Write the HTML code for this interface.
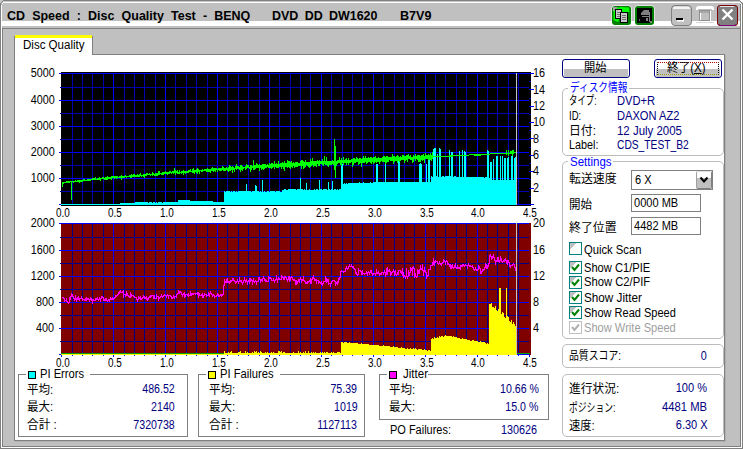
<!DOCTYPE html>
<html lang="ja">
<head>
<meta charset="utf-8">
<title>CD Speed : Disc Quality Test</title>
<style>
html,body{margin:0;padding:0}
body{width:743px;height:449px;overflow:hidden;background:#c0c0c0;position:relative;font-family:"Liberation Sans","Noto Sans CJK JP",sans-serif;font-size:12px}
.a{position:absolute}
.t{position:absolute;white-space:pre;line-height:16px;height:16px}
.gb{position:absolute;border:1px solid #bcbcbc;border-radius:5px;box-sizing:border-box}
.sq{position:absolute;border:1px solid #808080;box-sizing:border-box}
.lbg{position:absolute;background:#fff}
.btn{position:absolute;box-sizing:border-box;border:1px solid #000080;border-radius:3px;background:#fff;overflow:hidden}
.btn i{position:absolute;left:1px;right:1px;top:9px;bottom:0;background:#c0c0c0}
.edit{position:absolute;box-sizing:border-box;border:1px solid #808080;background:#fff}
.cb{position:absolute;width:13px;height:13px;box-sizing:border-box;border:1px solid #008080;background:linear-gradient(135deg,#c0c0c0 0,#c0c0c0 28%,#fff 29%)}
.cb svg{position:absolute;left:0;top:0}
.leg{position:absolute;width:8px;height:8px;box-sizing:border-box;border:1px solid #000}
</style>
</head>
<body>
<!-- outer frame -->
<div class="a" style="left:0;top:0;width:743px;height:1px;background:#808080"></div>
<div class="a" style="left:2px;top:1px;width:739px;height:1px;background:#c8c8c8"></div>
<div class="a" style="left:2px;top:2px;width:738px;height:1px;background:#fff"></div>
<div class="a" style="left:0;top:0;width:1px;height:449px;background:#808080"></div>
<div class="a" style="left:1px;top:3px;width:1px;height:445px;background:#fff"></div>
<div class="a" style="left:742px;top:0;width:1px;height:449px;background:#808080"></div>
<div class="a" style="left:741px;top:3px;width:1px;height:445px;background:#fff"></div>
<div class="a" style="left:740px;top:4px;width:1px;height:443px;background:#808080"></div>
<div class="a" style="left:0;top:448px;width:743px;height:1px;background:#808080"></div>
<div class="a" style="left:1px;top:447px;width:741px;height:1px;background:#fff"></div>
<div class="a" style="left:2px;top:446px;width:739px;height:1px;background:#808080"></div>
<!-- rounded corners of the window -->
<svg class="a" style="left:0;top:0" width="6" height="6" viewBox="0 0 6 6" shape-rendering="crispEdges"><rect width="3" height="1" fill="#c8c8c8"/><rect y="1" width="2" height="1" fill="#c8c8c8"/><rect y="2" width="1" height="1" fill="#c8c8c8"/><rect x="2" y="1" width="1" height="1" fill="#808080"/><rect x="1" y="2" width="1" height="1" fill="#808080"/><rect x="2" y="2" width="1" height="1" fill="#c0c0c0"/><rect x="1" y="3" width="1" height="2" fill="#c0c0c0"/><rect x="3" y="2" width="1" height="1" fill="#fff"/><rect x="2" y="3" width="1" height="1" fill="#fff"/></svg>
<svg class="a" style="left:737px;top:0" width="6" height="6" viewBox="0 0 6 6" shape-rendering="crispEdges"><rect x="3" width="3" height="1" fill="#fff"/><rect x="4" y="1" width="2" height="1" fill="#fff"/><rect x="5" y="2" width="1" height="1" fill="#d0d0d0"/><rect x="2" y="0" width="1" height="1" fill="#808080"/><rect x="3" y="1" width="1" height="1" fill="#808080"/><rect x="4" y="2" width="1" height="1" fill="#808080"/><rect x="5" y="3" width="1" height="1" fill="#808080"/><rect x="2" y="2" width="1" height="1" fill="#fff"/><rect x="3" y="3" width="1" height="1" fill="#fff"/><rect x="4" y="4" width="1" height="1" fill="#fff"/><rect x="3" y="2" width="1" height="1" fill="#c0c0c0"/><rect x="4" y="3" width="1" height="1" fill="#c0c0c0"/></svg>
<!-- white band under the title -->
<div class="a" style="left:2px;top:21px;width:738px;height:5px;background:#fff"></div>
<!-- inner sunken box -->
<div class="a" style="left:2px;top:28px;width:738px;height:1px;background:#808080"></div>
<div class="a" style="left:2px;top:28px;width:1px;height:418px;background:#808080"></div>
<!-- tab pane -->
<div class="a" style="left:14px;top:54px;width:711px;height:387px;background:#808080"></div>
<div class="a" style="left:725px;top:55px;width:1px;height:387px;background:#b0b0b0"></div>
<div class="a" style="left:15px;top:441px;width:711px;height:1px;background:#b0b0b0"></div>
<div class="a" style="left:15px;top:55px;width:709px;height:385px;background:#fff"></div>
<!-- tab -->
<div class="a" style="left:14px;top:36px;width:79px;height:19px;background:#808080"></div>
<div class="a" style="left:15px;top:35px;width:77px;height:3px;background:#ffff00;border-radius:1px 1px 0 0"></div>
<div class="a" style="left:15px;top:38px;width:77px;height:18px;background:#fff"></div>

<!-- title bar buttons -->
<svg class="a" style="left:606px;top:0" width="137" height="30" viewBox="606 0 137 30">
 <!-- icon 1 -->
 <rect x="611.5" y="5.5" width="20" height="20" rx="3" fill="#fff"/>
 <rect x="612" y="6" width="19" height="19" rx="3" fill="#008000"/>
 <path d="M613.5 8.5 L621 7 L629 7.5 L629.5 12 L622 13 L618 22 L613.5 20 Z" fill="#00ff00"/>
 <path d="M613 7 L618 7 L613 12 Z" fill="#a0a0a0"/>
 <rect x="615.5" y="9.500" width="6" height="9" fill="#c8c8c8" stroke="#000" stroke-width="1"/>
 <rect x="620.500" y="12.500" width="7" height="10" fill="#c8c8c8" stroke="#000" stroke-width="1"/>
 <path d="M622 15.500h4M622 17.500h4M622 19.500h4M617 12.500h3M617 14.500h3M617 16.500h3" stroke="#707070" stroke-width="1"/>
 <!-- icon 2 -->
 <rect x="634.5" y="5.500" width="20" height="20" rx="3" fill="#fff"/>
 <rect x="635" y="6" width="19" height="19" rx="3" fill="#008000"/>
 <rect x="637" y="8" width="15" height="15" fill="#000"/>
 <path d="M641 13 L644 10 L649 10 L649 15 L641 15 Z" fill="#808080"/>
 <rect x="646" y="18" width="2" height="3" fill="#808080"/>
 <rect x="649" y="12" width="1" height="10" fill="#808080"/>
 <rect x="642" y="16" width="8" height="1" fill="#808080"/>
 <rect x="650" y="21" width="2" height="2" fill="#808080"/>
 <rect x="639" y="19" width="1" height="2" fill="#606060"/>
 <!-- minimize -->
 <rect x="671.500" y="5.500" width="20" height="20" rx="3.5" fill="#c0c0c0" stroke="#808080"/>
 <path d="M673 9 V8 Q673 6.500 675 6.500 H688 Q690 6.500 690 8 V9 Z" fill="#f4f4f4"/>
 <rect x="677" y="19" width="7" height="2.500" fill="#fff"/>
 <rect x="676" y="18" width="7" height="2" fill="#000"/>
 <!-- maximize (disabled) -->
 <path d="M696 10 V8.500 Q696 6 699 6 H711 Q714 6 714 8.500 V10 H712 V9 H698 V10 Z" fill="#fff"/>
 <rect x="700.500" y="11.500" width="10" height="10" fill="none" stroke="#fff"/>
 <rect x="699.500" y="10.500" width="10" height="10" fill="none" stroke="#909090"/>
 <rect x="700" y="11" width="9" height="2" fill="#a8a8a8"/>
 <rect x="696" y="22" width="18" height="1" fill="#d8d8d8"/>
 <!-- close -->
 <rect x="717.500" y="5.500" width="20" height="20" rx="2.500" fill="#808080" stroke="#800000"/>
 <rect x="720" y="6" width="14" height="1" fill="#e0e8e8"/>
 <path d="M719 24.500 Q720 25.500 721 25.500 H734 Q735 25.500 736 24.500" stroke="#800080" fill="none"/>
 <path d="M722.500 9.500 L732.500 19.500 M732.500 9.500 L722.500 19.500" stroke="#fff" stroke-width="2.400" fill="none"/>
</svg>

<svg id="charts" width="743" height="449" viewBox="0 0 743 449" shape-rendering="crispEdges" style="position:absolute;left:0;top:0">
<rect x="61" y="72" width="470" height="134" fill="#000"/>
<rect x="72" y="73" width="1" height="132" fill="#0000b0"/><rect x="82" y="73" width="1" height="132" fill="#0000b0"/><rect x="92" y="73" width="1" height="132" fill="#0000b0"/><rect x="103" y="73" width="1" height="132" fill="#0000b0"/><rect x="113" y="73" width="1" height="132" fill="#0000ff"/><rect x="124" y="73" width="1" height="132" fill="#0000b0"/><rect x="134" y="73" width="1" height="132" fill="#0000b0"/><rect x="144" y="73" width="1" height="132" fill="#0000b0"/><rect x="155" y="73" width="1" height="132" fill="#0000b0"/><rect x="165" y="73" width="1" height="132" fill="#0000ff"/><rect x="175" y="73" width="1" height="132" fill="#0000b0"/><rect x="186" y="73" width="1" height="132" fill="#0000b0"/><rect x="196" y="73" width="1" height="132" fill="#0000b0"/><rect x="207" y="73" width="1" height="132" fill="#0000b0"/><rect x="217" y="73" width="1" height="132" fill="#0000ff"/><rect x="227" y="73" width="1" height="132" fill="#0000b0"/><rect x="238" y="73" width="1" height="132" fill="#0000b0"/><rect x="248" y="73" width="1" height="132" fill="#0000b0"/><rect x="259" y="73" width="1" height="132" fill="#0000b0"/><rect x="269" y="73" width="1" height="132" fill="#0000ff"/><rect x="279" y="73" width="1" height="132" fill="#0000b0"/><rect x="290" y="73" width="1" height="132" fill="#0000b0"/><rect x="300" y="73" width="1" height="132" fill="#0000b0"/><rect x="310" y="73" width="1" height="132" fill="#0000b0"/><rect x="321" y="73" width="1" height="132" fill="#0000ff"/><rect x="331" y="73" width="1" height="132" fill="#0000b0"/><rect x="342" y="73" width="1" height="132" fill="#0000b0"/><rect x="352" y="73" width="1" height="132" fill="#0000b0"/><rect x="362" y="73" width="1" height="132" fill="#0000b0"/><rect x="373" y="73" width="1" height="132" fill="#0000ff"/><rect x="383" y="73" width="1" height="132" fill="#0000b0"/><rect x="394" y="73" width="1" height="132" fill="#0000b0"/><rect x="404" y="73" width="1" height="132" fill="#0000b0"/><rect x="414" y="73" width="1" height="132" fill="#0000b0"/><rect x="425" y="73" width="1" height="132" fill="#0000ff"/><rect x="435" y="73" width="1" height="132" fill="#0000b0"/><rect x="445" y="73" width="1" height="132" fill="#0000b0"/><rect x="456" y="73" width="1" height="132" fill="#0000b0"/><rect x="466" y="73" width="1" height="132" fill="#0000b0"/><rect x="477" y="73" width="1" height="132" fill="#0000ff"/><rect x="487" y="73" width="1" height="132" fill="#0000b0"/><rect x="497" y="73" width="1" height="132" fill="#0000b0"/><rect x="508" y="73" width="1" height="132" fill="#0000b0"/><rect x="518" y="73" width="1" height="132" fill="#0000b0"/><rect x="59" y="73" width="470" height="1" fill="#0000ff"/><rect x="60" y="87" width="469" height="1" fill="#0000b0"/><rect x="59" y="100" width="470" height="1" fill="#0000ff"/><rect x="60" y="113" width="469" height="1" fill="#0000b0"/><rect x="59" y="126" width="470" height="1" fill="#0000ff"/><rect x="60" y="139" width="469" height="1" fill="#0000b0"/><rect x="59" y="152" width="470" height="1" fill="#0000ff"/><rect x="60" y="165" width="469" height="1" fill="#0000b0"/><rect x="59" y="178" width="470" height="1" fill="#0000ff"/><rect x="60" y="191" width="469" height="1" fill="#0000b0"/><rect x="59" y="204" width="470" height="1" fill="#0000ff"/>
<rect x="529" y="204" width="5" height="1" fill="#0000ff"/>
<rect x="529" y="196" width="2" height="1" fill="#0000b0"/>
<rect x="529" y="188" width="5" height="1" fill="#0000ff"/>
<rect x="529" y="179" width="2" height="1" fill="#0000b0"/>
<rect x="529" y="171" width="5" height="1" fill="#0000ff"/>
<rect x="529" y="163" width="2" height="1" fill="#0000b0"/>
<rect x="529" y="155" width="5" height="1" fill="#0000ff"/>
<rect x="529" y="147" width="2" height="1" fill="#0000b0"/>
<rect x="529" y="138" width="5" height="1" fill="#0000ff"/>
<rect x="529" y="130" width="2" height="1" fill="#0000b0"/>
<rect x="529" y="122" width="5" height="1" fill="#0000ff"/>
<rect x="529" y="114" width="2" height="1" fill="#0000b0"/>
<rect x="529" y="106" width="5" height="1" fill="#0000ff"/>
<rect x="529" y="98" width="2" height="1" fill="#0000b0"/>
<rect x="529" y="89" width="5" height="1" fill="#0000ff"/>
<rect x="529" y="81" width="2" height="1" fill="#0000b0"/>
<rect x="529" y="73" width="5" height="1" fill="#0000ff"/>
<path d="M61,205V204H120V203H135V202H148V203H149V202H152V203H153V202H155V203H156V202H157V203H158V202H162V203H163V202H178V200H190V201H213V202H224V191H225V192H226V191H230V192H231V191H232V192H233V191H235V192H236V191H237V192H238V191H246V184H247V191H251V192H252V191H255V185H256V186H257V191H259V192H260V191H261V192H262V180H263V192H264V191H265V192H267V191H269V192H270V191H275V192H276V191H280V192H282V190H284V189H286V190H288V189H296V190H297V189H300V178H301V189H303V190H304V189H305V190H306V183H307V190H309V189H310V190H314V189H315V190H316V189H318V190H319V180H320V189H322V190H323V189H327V190H328V182H329V189H330V190H331V189H332V181H333V190H334V189H336V190H337V189H338V190H339V189H341V164H343V184H344V183H345V184H346V183H347V184H348V183H359V182H360V183H363V182H364V183H370V182H371V183H373V182H376V164H378V182H385V163H386V182H398V161H400V182H419V164H420V163H421V164H422V182H426V164H427V182H428V158H430V182H431V176H432V177H433V149H434V148H436V176H437V154H438V177H439V148H440V149H441V177H442V176H444V177H445V176H449V150H450V176H451V152H453V177H454V176H456V177H459V151H460V177H462V150H463V177H464V151H465V152H466V177H484V178H485V177H487V150H488V151H489V178H490V162H492V180H493V159H494V180H496V156H498V180H500V156H501V180H502V156H503V180H504V158H506V180H507V158H508V157H509V180H511V156H513V180H514V158H515V157H517V205Z" fill="#00ffff"/>
<rect x="61" y="204" width="456" height="1" fill="#00ffff"/>
<path d="M62.5,182V187M63.5,182V184M64.5,182V183M65.5,182V183M66.5,181V183M67.5,181V183M68.5,181V183M69.5,181V183M70.5,181V182M71.5,181V200M72.5,181V182M73.5,181V183M74.5,181V182M75.5,180V182M76.5,181V182M77.5,180V182M78.5,180V182M79.5,180V183M80.5,180V182M81.5,180V182M82.5,180V182M83.5,179V181M84.5,179V181M85.5,180V181M86.5,180V181M87.5,179V181M88.5,179V181M89.5,179V181M90.5,179V181M91.5,179V180M92.5,178V180M93.5,178V180M94.5,178V180M95.5,177V180M96.5,179V180M97.5,178V180M98.5,178V180M99.5,177V180M100.5,178V181M101.5,178V179M102.5,177V179M103.5,177V179M104.5,178V180M105.5,177V180M106.5,177V180M107.5,176V180M108.5,177V179M109.5,177V179M110.5,177V179M111.5,176V180M112.5,176V178M113.5,176V178M114.5,176V179M115.5,176V178M116.5,176V179M117.5,176V178M118.5,177V178M119.5,176V178M120.5,176V178M121.5,175V180M122.5,176V178M123.5,176V178M124.5,176V178M125.5,175V177M126.5,176V178M127.5,176V177M128.5,176V177M129.5,175V177M130.5,175V178M131.5,174V178M132.5,175V177M133.5,174V177M134.5,174V177M135.5,175V177M136.5,175V177M137.5,174V177M138.5,175V177M139.5,174V177M140.5,173V176M141.5,175V177M142.5,175V176M143.5,174V177M144.5,174V178M145.5,174V176M146.5,173V176M147.5,173V175M148.5,174V175M149.5,173V175M150.5,174V176M151.5,174V175M152.5,172V176M153.5,173V175M154.5,174V176M155.5,173V176M156.5,173V176M157.5,173V176M158.5,171V175M159.5,171V175M160.5,173V174M161.5,173V175M162.5,172V175M163.5,172V175M164.5,172V174M165.5,171V174M166.5,172V174M167.5,172V175M168.5,172V174M169.5,171V174M170.5,171V173M171.5,172V174M172.5,171V173M173.5,171V174M174.5,168V173M175.5,170V175M176.5,171V173M177.5,170V174M178.5,172V174M179.5,170V174M180.5,172V173M181.5,171V174M182.5,171V173M183.5,170V175M184.5,171V173M185.5,171V174M186.5,171V173M187.5,171V173M188.5,170V173M189.5,170V172M190.5,169V172M191.5,171V172M192.5,169V173M193.5,168V173M194.5,170V174M195.5,170V172M196.5,169V173M197.5,168V174M198.5,169V172M199.5,170V174M200.5,170V171M201.5,170V172M202.5,169V172M203.5,170V171M204.5,169V171M205.5,169V171M206.5,169V172M207.5,168V172M208.5,169V172M209.5,169V172M210.5,169V173M211.5,168V171M212.5,167V171M213.5,168V172M214.5,168V171M215.5,168V172M216.5,168V170M217.5,169V172M218.5,168V170M219.5,168V171M220.5,168V171M221.5,168V171M222.5,166V170M223.5,167V171M224.5,168V171M225.5,168V171M226.5,167V170M227.5,168V171M228.5,167V172M229.5,165V171M230.5,166V171M231.5,167V170M232.5,166V173M233.5,167V170M234.5,168V172M235.5,166V169M236.5,164V170M237.5,166V169M238.5,166V169M239.5,167V170M240.5,165V172M241.5,165V170M242.5,166V171M243.5,167V169M244.5,167V168M245.5,166V170M246.5,164V169M247.5,165V168M248.5,165V168M249.5,167V169M250.5,165V172M251.5,165V170M252.5,166V168M253.5,160V170M254.5,165V170M255.5,165V169M256.5,163V168M257.5,164V168M258.5,165V168M259.5,164V171M260.5,165V168M261.5,165V170M262.5,164V169M263.5,164V170M264.5,164V169M265.5,164V168M266.5,165V168M267.5,164V167M268.5,165V168M269.5,163V168M270.5,164V168M271.5,163V169M272.5,163V168M273.5,164V167M274.5,161V169M275.5,164V167M276.5,163V168M277.5,164V168M278.5,161V168M279.5,164V167M280.5,163V167M281.5,163V169M282.5,162V167M283.5,163V169M284.5,161V171M285.5,163V167M286.5,163V167M287.5,160V168M288.5,161V167M289.5,161V168M290.5,162V169M291.5,161V167M292.5,163V168M293.5,162V166M294.5,163V168M295.5,162V167M296.5,162V167M297.5,162V167M298.5,163V166M299.5,163V166M300.5,161V166M301.5,160V169M302.5,160V166M303.5,161V169M304.5,162V168M305.5,160V167M306.5,162V165M307.5,162V166M308.5,162V167M309.5,162V168M310.5,159V167M311.5,161V166M312.5,158V165M313.5,161V167M314.5,161V166M315.5,161V166M316.5,161V167M317.5,160V164M318.5,161V166M319.5,160V166M320.5,161V164M321.5,161V164M322.5,159V165M323.5,161V166M324.5,156V164M325.5,161V165M326.5,157V165M327.5,161V166M328.5,161V167M329.5,161V165M330.5,161V165M331.5,161V165M332.5,160V164M333.5,161V165M334.5,139V170M335.5,146V178M336.5,161V166M337.5,160V164M338.5,160V163M339.5,157V163M340.5,160V165M341.5,158V166M342.5,160V163M343.5,157V165M344.5,160V163M345.5,159V163M346.5,158V165M347.5,160V163M348.5,158V165M349.5,160V163M350.5,160V163M351.5,159V162M352.5,159V167M353.5,158V165M354.5,158V163M355.5,159V163M356.5,157V162M357.5,158V162M358.5,159V165M359.5,158V164M360.5,158V163M361.5,159V167M362.5,158V163M363.5,156V163M364.5,158V163M365.5,156V162M366.5,158V164M367.5,158V163M368.5,157V162M369.5,158V162M370.5,157V163M371.5,157V164M372.5,158V162M373.5,157V164M374.5,157V163M375.5,156V162M376.5,158V163M377.5,158V162M378.5,157V162M379.5,158V164M380.5,158V162M381.5,158V161M382.5,157V162M383.5,156V162M384.5,156V162M385.5,157V164M386.5,156V163M387.5,156V162M388.5,157V162M389.5,157V160M390.5,157V161M391.5,157V161M392.5,154V161M393.5,156V164M394.5,156V162M395.5,157V161M396.5,156V161M397.5,155V163M398.5,156V161M399.5,157V162M400.5,156V161M401.5,157V160M402.5,155V160M403.5,155V160M404.5,156V163M405.5,156V161M406.5,155V160M407.5,155V162M408.5,154V159M409.5,156V159M410.5,155V160M411.5,157V160M412.5,157V163M413.5,155V162M414.5,156V159M415.5,154V161M416.5,156V159M417.5,155V160M418.5,155V162M419.5,155V162M420.5,156V162M421.5,155V160M422.5,155V161M423.5,154V160M424.5,156V163M425.5,153V159M426.5,155V159M427.5,155V159M428.5,154V160M429.5,155V160M430.5,153V160M431.5,155V161M432.5,152V159M433.5,156V157M434.5,156V157M435.5,156V157M436.5,156V157M437.5,156V157M438.5,156V157M439.5,156V157M440.5,156V157M441.5,156V157M442.5,156V157M443.5,156V157M444.5,156V157M445.5,156V157M446.5,156V157M447.5,156V157M448.5,156V157M449.5,155V157M450.5,155V157M451.5,155V157M452.5,155V157M453.5,155V156M454.5,155V156M455.5,155V156M456.5,155V156M457.5,155V156M458.5,155V156M459.5,155V156M460.5,155V156M461.5,155V156M462.5,155V156M463.5,155V156M464.5,155V156M465.5,155V156M466.5,155V156M467.5,155V156M468.5,155V156M469.5,154V155M470.5,154V155M471.5,154V155M472.5,154V155M473.5,154V155M474.5,154V156M475.5,154V156M476.5,154V156M477.5,154V156M478.5,154V156M479.5,154V156M480.5,154V156M481.5,154V155M482.5,154V155M483.5,154V155M484.5,154V155M485.5,154V155M486.5,154V155M487.5,154V155M488.5,154V155M489.5,154V155M490.5,153V154M491.5,153V154M492.5,153V154M493.5,153V154M494.5,153V154M495.5,153V154M496.5,153V154M497.5,153V154M498.5,153V154M499.5,153V154M500.5,153V154M501.5,153V154M502.5,153V154M503.5,153V154M504.5,153V154M505.5,153V154M506.5,150V155M507.5,153V154M508.5,150V156M509.5,153V154M510.5,151V154M511.5,151V154M512.5,150V156M513.5,150V154M514.5,152V153M515.5,152V153" stroke="#00ff00" stroke-width="1" fill="none"/>
<rect x="516" y="73" width="1" height="132" fill="#c0c0c0"/>
<rect x="61" y="223" width="470" height="132" fill="#800000"/>
<rect x="72" y="223" width="1" height="132" fill="#000088"/><rect x="82" y="223" width="1" height="132" fill="#000088"/><rect x="92" y="223" width="1" height="132" fill="#000088"/><rect x="103" y="223" width="1" height="132" fill="#000088"/><rect x="113" y="223" width="1" height="132" fill="#0000ff"/><rect x="124" y="223" width="1" height="132" fill="#000088"/><rect x="134" y="223" width="1" height="132" fill="#000088"/><rect x="144" y="223" width="1" height="132" fill="#000088"/><rect x="155" y="223" width="1" height="132" fill="#000088"/><rect x="165" y="223" width="1" height="132" fill="#0000ff"/><rect x="175" y="223" width="1" height="132" fill="#000088"/><rect x="186" y="223" width="1" height="132" fill="#000088"/><rect x="196" y="223" width="1" height="132" fill="#000088"/><rect x="207" y="223" width="1" height="132" fill="#000088"/><rect x="217" y="223" width="1" height="132" fill="#0000ff"/><rect x="227" y="223" width="1" height="132" fill="#000088"/><rect x="238" y="223" width="1" height="132" fill="#000088"/><rect x="248" y="223" width="1" height="132" fill="#000088"/><rect x="259" y="223" width="1" height="132" fill="#000088"/><rect x="269" y="223" width="1" height="132" fill="#0000ff"/><rect x="279" y="223" width="1" height="132" fill="#000088"/><rect x="290" y="223" width="1" height="132" fill="#000088"/><rect x="300" y="223" width="1" height="132" fill="#000088"/><rect x="310" y="223" width="1" height="132" fill="#000088"/><rect x="321" y="223" width="1" height="132" fill="#0000ff"/><rect x="331" y="223" width="1" height="132" fill="#000088"/><rect x="342" y="223" width="1" height="132" fill="#000088"/><rect x="352" y="223" width="1" height="132" fill="#000088"/><rect x="362" y="223" width="1" height="132" fill="#000088"/><rect x="373" y="223" width="1" height="132" fill="#0000ff"/><rect x="383" y="223" width="1" height="132" fill="#000088"/><rect x="394" y="223" width="1" height="132" fill="#000088"/><rect x="404" y="223" width="1" height="132" fill="#000088"/><rect x="414" y="223" width="1" height="132" fill="#000088"/><rect x="425" y="223" width="1" height="132" fill="#0000ff"/><rect x="435" y="223" width="1" height="132" fill="#000088"/><rect x="445" y="223" width="1" height="132" fill="#000088"/><rect x="456" y="223" width="1" height="132" fill="#000088"/><rect x="466" y="223" width="1" height="132" fill="#000088"/><rect x="477" y="223" width="1" height="132" fill="#0000ff"/><rect x="487" y="223" width="1" height="132" fill="#000088"/><rect x="497" y="223" width="1" height="132" fill="#000088"/><rect x="508" y="223" width="1" height="132" fill="#000088"/><rect x="518" y="223" width="1" height="132" fill="#000088"/><rect x="59" y="223" width="470" height="1" fill="#0000ff"/><rect x="60" y="237" width="469" height="1" fill="#000088"/><rect x="59" y="250" width="470" height="1" fill="#0000ff"/><rect x="60" y="263" width="469" height="1" fill="#000088"/><rect x="59" y="276" width="470" height="1" fill="#0000ff"/><rect x="60" y="289" width="469" height="1" fill="#000088"/><rect x="59" y="302" width="470" height="1" fill="#0000ff"/><rect x="60" y="315" width="469" height="1" fill="#000088"/><rect x="59" y="328" width="470" height="1" fill="#0000ff"/><rect x="60" y="341" width="469" height="1" fill="#000088"/><rect x="59" y="354" width="470" height="1" fill="#0000ff"/>
<rect x="61" y="355" width="1" height="2" fill="#0000ff"/>
<rect x="72" y="355" width="1" height="1" fill="#0000ff"/>
<rect x="82" y="355" width="1" height="1" fill="#0000ff"/>
<rect x="92" y="355" width="1" height="1" fill="#0000ff"/>
<rect x="103" y="355" width="1" height="1" fill="#0000ff"/>
<rect x="113" y="355" width="1" height="2" fill="#0000ff"/>
<rect x="124" y="355" width="1" height="1" fill="#0000ff"/>
<rect x="134" y="355" width="1" height="1" fill="#0000ff"/>
<rect x="144" y="355" width="1" height="1" fill="#0000ff"/>
<rect x="155" y="355" width="1" height="1" fill="#0000ff"/>
<rect x="165" y="355" width="1" height="2" fill="#0000ff"/>
<rect x="175" y="355" width="1" height="1" fill="#0000ff"/>
<rect x="186" y="355" width="1" height="1" fill="#0000ff"/>
<rect x="196" y="355" width="1" height="1" fill="#0000ff"/>
<rect x="207" y="355" width="1" height="1" fill="#0000ff"/>
<rect x="217" y="355" width="1" height="2" fill="#0000ff"/>
<rect x="227" y="355" width="1" height="1" fill="#0000ff"/>
<rect x="238" y="355" width="1" height="1" fill="#0000ff"/>
<rect x="248" y="355" width="1" height="1" fill="#0000ff"/>
<rect x="259" y="355" width="1" height="1" fill="#0000ff"/>
<rect x="269" y="355" width="1" height="2" fill="#0000ff"/>
<rect x="279" y="355" width="1" height="1" fill="#0000ff"/>
<rect x="290" y="355" width="1" height="1" fill="#0000ff"/>
<rect x="300" y="355" width="1" height="1" fill="#0000ff"/>
<rect x="310" y="355" width="1" height="1" fill="#0000ff"/>
<rect x="321" y="355" width="1" height="2" fill="#0000ff"/>
<rect x="331" y="355" width="1" height="1" fill="#0000ff"/>
<rect x="342" y="355" width="1" height="1" fill="#0000ff"/>
<rect x="352" y="355" width="1" height="1" fill="#0000ff"/>
<rect x="362" y="355" width="1" height="1" fill="#0000ff"/>
<rect x="373" y="355" width="1" height="2" fill="#0000ff"/>
<rect x="383" y="355" width="1" height="1" fill="#0000ff"/>
<rect x="394" y="355" width="1" height="1" fill="#0000ff"/>
<rect x="404" y="355" width="1" height="1" fill="#0000ff"/>
<rect x="414" y="355" width="1" height="1" fill="#0000ff"/>
<rect x="425" y="355" width="1" height="2" fill="#0000ff"/>
<rect x="435" y="355" width="1" height="1" fill="#0000ff"/>
<rect x="445" y="355" width="1" height="1" fill="#0000ff"/>
<rect x="456" y="355" width="1" height="1" fill="#0000ff"/>
<rect x="466" y="355" width="1" height="1" fill="#0000ff"/>
<rect x="477" y="355" width="1" height="2" fill="#0000ff"/>
<rect x="487" y="355" width="1" height="1" fill="#0000ff"/>
<rect x="497" y="355" width="1" height="1" fill="#0000ff"/>
<rect x="508" y="355" width="1" height="1" fill="#0000ff"/>
<rect x="518" y="355" width="1" height="1" fill="#0000ff"/>
<rect x="529" y="355" width="1" height="2" fill="#0000ff"/>
<rect x="61" y="353" width="164" height="1" fill="#00a000"/>
<path d="M61,355V354H224V351H225V353H228V352H229V353H230V352H231V351H232V353H238V352H240V351H241V353H245V351H246V353H247V352H248V353H252V352H253V353H254V351H255V352H256V351H257V353H258V352H259V353H260V351H261V352H262V353H265V352H266V353H267V352H268V353H271V352H272V353H273V352H274V353H278V351H280V352H281V351H282V353H283V352H285V353H293V352H294V353H298V351H299V353H300V352H301V353H303V352H304V353H305V351H306V353H308V351H309V353H311V352H312V353H313V352H314V353H315V352H316V353H320V352H321V353H322V352H323V353H324V352H325V353H326V352H328V353H331V352H332V353H333V352H334V353H337V352H340V353H341V342H343V343H344V342H347V343H349V342H350V343H358V344H361V343H362V344H369V345H379V346H383V345H384V346H390V347H393V346H394V347H398V348H401V347H402V348H405V349H407V348H408V349H410V348H411V349H413V348H414V349H415V348H416V349H417V350H418V349H422V350H424V349H425V350H427V351H428V350H430V351H431V339H432V338H433V339H434V337H435V338H437V337H438V338H439V336H440V337H441V336H443V337H444V336H445V335H446V336H452V337H453V336H454V337H457V338H460V339H462V338H463V339H467V340H470V341H472V340H474V341H478V342H480V341H481V342H485V343H486V344H487V343H488V344H489V304H491V303H492V307H494V308H495V306H496V310H497V311H498V309H499V288H501V314H502V312H503V313H504V317H505V318H506V288H507V316H508V317H509V321H510V322H511V320H512V324H513V322H514V324H515V326H517V355Z" fill="#ffff00"/>
<rect x="517" y="353" width="13" height="1" fill="#00a000"/>
<path d="M62.5,297V298M63.5,297V299M64.5,298V302M65.5,300V301M66.5,298V302M67.5,301V303M68.5,302V304M69.5,297V303M70.5,296V300M71.5,293V297M72.5,294V297M73.5,296V299M74.5,298V301M75.5,295V300M76.5,298V302M77.5,297V300M78.5,296V300M79.5,298V301M80.5,298V299M81.5,296V299M82.5,298V301M83.5,299V300M84.5,299V301M85.5,298V301M86.5,297V301M87.5,298V300M88.5,298V300M89.5,299V302M90.5,297V300M91.5,298V301M92.5,299V304M93.5,299V301M94.5,300V301M95.5,298V301M96.5,298V300M97.5,297V300M98.5,299V301M99.5,297V300M100.5,298V302M101.5,296V299M102.5,296V298M103.5,297V301M104.5,299V301M105.5,298V301M106.5,298V301M107.5,300V302M108.5,299V301M109.5,299V302M110.5,297V300M111.5,298V300M112.5,297V300M113.5,298V300M114.5,297V299M115.5,295V298M116.5,295V297M117.5,294V296M118.5,292V295M119.5,291V294M120.5,290V293M121.5,292V293M122.5,291V293M123.5,290V298M124.5,294V295M125.5,294V297M126.5,291V296M127.5,293V296M128.5,295V297M129.5,296V298M130.5,292V298M131.5,294V297M132.5,295V296M133.5,295V297M134.5,296V298M135.5,297V298M136.5,297V300M137.5,299V302M138.5,296V300M139.5,297V299M140.5,296V300M141.5,298V300M142.5,297V299M143.5,295V298M144.5,296V299M145.5,297V299M146.5,296V300M147.5,298V301M148.5,297V300M149.5,296V298M150.5,295V298M151.5,295V297M152.5,295V296M153.5,295V299M154.5,295V299M155.5,298V299M156.5,294V299M157.5,296V297M158.5,296V301M159.5,297V299M160.5,296V298M161.5,294V297M162.5,296V298M163.5,295V297M164.5,294V296M165.5,295V296M166.5,295V298M167.5,294V296M168.5,295V299M169.5,295V296M170.5,295V297M171.5,296V299M172.5,297V299M173.5,295V298M174.5,296V299M175.5,296V297M176.5,294V298M177.5,293V295M178.5,290V294M179.5,291V294M180.5,291V293M181.5,292V295M182.5,294V297M183.5,293V295M184.5,292V298M185.5,294V297M186.5,294V295M187.5,294V296M188.5,293V297M189.5,295V296M190.5,291V296M191.5,293V296M192.5,293V295M193.5,293V295M194.5,293V294M195.5,293V295M196.5,293V294M197.5,292V295M198.5,292V298M199.5,293V296M200.5,295V296M201.5,294V296M202.5,293V298M203.5,295V298M204.5,293V296M205.5,294V295M206.5,294V297M207.5,295V296M208.5,292V296M209.5,293V297M210.5,291V294M211.5,293V295M212.5,294V297M213.5,294V296M214.5,295V298M215.5,296V297M216.5,295V297M217.5,293V296M218.5,294V297M219.5,295V297M220.5,294V296M221.5,294V297M222.5,294V296M223.5,285V295M224.5,279V286M225.5,281V283M226.5,279V283M227.5,278V283M228.5,281V283M229.5,281V284M230.5,280V283M231.5,280V282M232.5,278V281M233.5,278V281M234.5,280V282M235.5,281V284M236.5,281V283M237.5,279V282M238.5,281V284M239.5,277V282M240.5,280V282M241.5,280V283M242.5,282V285M243.5,280V283M244.5,277V281M245.5,280V283M246.5,279V282M247.5,281V285M248.5,280V282M249.5,278V284M250.5,278V282M251.5,279V281M252.5,280V285M253.5,278V282M254.5,281V283M255.5,280V282M256.5,281V285M257.5,281V282M258.5,277V282M259.5,277V280M260.5,279V283M261.5,279V281M262.5,278V282M263.5,276V279M264.5,278V281M265.5,279V282M266.5,280V282M267.5,281V282M268.5,276V282M269.5,277V279M270.5,277V279M271.5,278V281M272.5,280V281M273.5,278V281M274.5,280V283M275.5,279V281M276.5,275V280M277.5,279V283M278.5,277V280M279.5,278V280M280.5,279V280M281.5,275V280M282.5,276V278M283.5,277V280M284.5,276V280M285.5,276V278M286.5,277V280M287.5,279V282M288.5,276V280M289.5,276V282M290.5,277V281M291.5,276V278M292.5,277V280M293.5,279V281M294.5,279V281M295.5,280V285M296.5,280V285M297.5,281V284M298.5,279V282M299.5,279V283M300.5,277V280M301.5,279V283M302.5,279V281M303.5,276V281M304.5,280V282M305.5,281V284M306.5,282V284M307.5,281V284M308.5,281V283M309.5,280V282M310.5,278V284M311.5,279V284M312.5,277V280M313.5,275V279M314.5,278V281M315.5,279V281M316.5,279V284M317.5,280V281M318.5,280V284M319.5,281V283M320.5,282V284M321.5,281V285M322.5,283V286M323.5,281V284M324.5,281V282M325.5,276V282M326.5,278V283M327.5,279V282M328.5,279V285M329.5,283V284M330.5,283V287M331.5,281V284M332.5,280V282M333.5,280V281M334.5,280V282M335.5,281V286M336.5,282V284M337.5,281V285M338.5,278V283M339.5,277V280M340.5,271V278M341.5,270V272M342.5,271V272M343.5,271V273M344.5,271V272M345.5,268V272M346.5,266V269M347.5,268V270M348.5,266V269M349.5,264V267M350.5,266V267M351.5,264V267M352.5,266V268M353.5,266V269M354.5,268V270M355.5,269V274M356.5,272V275M357.5,274V276M358.5,268V275M359.5,270V271M360.5,270V272M361.5,271V275M362.5,270V275M363.5,273V274M364.5,273V275M365.5,273V274M366.5,271V274M367.5,272V276M368.5,271V273M369.5,272V275M370.5,270V273M371.5,270V274M372.5,273V276M373.5,273V275M374.5,273V274M375.5,273V276M376.5,269V274M377.5,272V274M378.5,271V274M379.5,273V276M380.5,273V275M381.5,272V275M382.5,272V273M383.5,272V275M384.5,270V273M385.5,272V277M386.5,268V275M387.5,267V275M388.5,270V272M389.5,269V272M390.5,271V276M391.5,272V275M392.5,271V273M393.5,269V272M394.5,271V276M395.5,270V275M396.5,274V276M397.5,272V275M398.5,270V275M399.5,270V271M400.5,270V273M401.5,271V274M402.5,268V276M403.5,272V278M404.5,275V277M405.5,276V279M406.5,268V277M407.5,276V279M408.5,270V277M409.5,272V276M410.5,267V273M411.5,268V271M412.5,267V276M413.5,266V269M414.5,268V278M415.5,273V277M416.5,276V278M417.5,269V277M418.5,270V274M419.5,269V274M420.5,265V270M421.5,268V270M422.5,264V271M423.5,270V276M424.5,267V272M425.5,270V273M426.5,272V279M427.5,275V277M428.5,269V276M429.5,269V270M430.5,265V270M431.5,265V266M432.5,262V266M433.5,258V265M434.5,261V266M435.5,260V263M436.5,261V262M437.5,261V264M438.5,263V265M439.5,261V264M440.5,263V265M441.5,263V266M442.5,262V264M443.5,259V263M444.5,260V262M445.5,261V265M446.5,260V262M447.5,261V265M448.5,263V265M449.5,264V267M450.5,264V269M451.5,265V269M452.5,264V268M453.5,267V269M454.5,265V268M455.5,263V268M456.5,267V269M457.5,265V269M458.5,267V269M459.5,267V269M460.5,265V270M461.5,265V267M462.5,264V267M463.5,264V266M464.5,265V267M465.5,264V266M466.5,265V266M467.5,265V269M468.5,263V266M469.5,265V267M470.5,265V267M471.5,266V267M472.5,265V268M473.5,267V270M474.5,269V271M475.5,267V270M476.5,269V271M477.5,269V271M478.5,265V270M479.5,266V269M480.5,268V274M481.5,271V274M482.5,269V272M483.5,269V271M484.5,267V270M485.5,263V268M486.5,264V269M487.5,265V269M488.5,263V267M489.5,255V264M490.5,254V257M491.5,256V260M492.5,256V259M493.5,254V258M494.5,257V261M495.5,260V265M496.5,260V262M497.5,257V262M498.5,257V262M499.5,260V263M500.5,256V261M501.5,258V262M502.5,261V263M503.5,260V262M504.5,259V262M505.5,258V261M506.5,260V264M507.5,260V265M508.5,260V263M509.5,262V267M510.5,265V268M511.5,265V266M512.5,264V266M513.5,263V265M514.5,264V268M515.5,267V271" stroke="#ff00ff" stroke-width="1" fill="none"/>
<rect x="516" y="223" width="1" height="131" fill="#c0c0c0"/>
</svg>

<!-- right panel -->
<div class="btn" style="left:562px;top:59px;width:68px;height:19px"><i></i></div>
<div class="btn" style="left:654px;top:59px;width:68px;height:19px"><i></i>
 <div class="a" style="left:2px;top:2px;right:2px;bottom:2px;border:1px dotted #000;border-top-color:#c00000;border-bottom-color:#a0a000;box-sizing:border-box"></div></div>

<div class="gb" style="left:562px;top:88px;width:162px;height:68px;border-right-color:#bcbcbc"></div>
<div class="lbg" style="left:568px;top:82px;width:61px;height:12px"></div>
<div class="gb" style="left:562px;top:161px;width:162px;height:178px"></div>
<div class="lbg" style="left:568px;top:156px;width:45px;height:12px"></div>
<div class="gb" style="left:562px;top:344px;width:162px;height:24px"></div>
<div class="gb" style="left:562px;top:374px;width:162px;height:63px"></div>

<!-- combo + edits -->
<div class="edit" style="left:631px;top:170px;width:82px;height:20px"></div>
<div class="a" style="left:696px;top:171px;width:16px;height:18px;background:linear-gradient(#fff 0,#fff 38%,#c0c0c0 39%);border:1px solid #808080;border-left-color:#a0a0a0;border-top-color:#e0e0e0;border-radius:2px;box-sizing:border-box"></div>
<svg class="a" style="left:699px;top:176px" width="10" height="8" viewBox="0 0 10 8"><path d="M1.500 1.500 L5 5.500 L8.500 1.500" stroke="#000" stroke-width="2" fill="none"/></svg>
<div class="edit" style="left:631px;top:194px;width:70px;height:18px"></div>
<div class="edit" style="left:631px;top:217px;width:70px;height:18px"></div>

<!-- checkboxes -->
<div class="cb" style="left:569px;top:242px"></div>
<div class="cb" style="left:569px;top:261px"><svg width="11" height="11" viewBox="0 0 11 11"><path d="M2 5 L4.500 8 L9 2.500" stroke="#008000" stroke-width="2" fill="none"/></svg></div>
<div class="cb" style="left:569px;top:276px"><svg width="11" height="11" viewBox="0 0 11 11"><path d="M2 5 L4.500 8 L9 2.500" stroke="#008000" stroke-width="2" fill="none"/></svg></div>
<div class="cb" style="left:569px;top:291px"><svg width="11" height="11" viewBox="0 0 11 11"><path d="M2 5 L4.500 8 L9 2.500" stroke="#008000" stroke-width="2" fill="none"/></svg></div>
<div class="cb" style="left:569px;top:306px"><svg width="11" height="11" viewBox="0 0 11 11"><path d="M2 5 L4.500 8 L9 2.500" stroke="#008000" stroke-width="2" fill="none"/></svg></div>
<div class="cb" style="left:569px;top:321px;border-color:#c0c0c0;background:#fff"><svg width="11" height="11" viewBox="0 0 11 11"><path d="M2 5 L4.500 8 L9 2.500" stroke="#b0b0b0" stroke-width="2" fill="none"/></svg></div>

<!-- bottom group boxes -->
<div class="sq" style="left:18px;top:374px;width:170px;height:63px"></div>
<div class="lbg" style="left:26px;top:370px;width:64px;height:10px"></div>
<div class="leg" style="left:28px;top:371px;background:#00ffff"></div>
<div class="sq" style="left:198px;top:374px;width:167px;height:63px"></div>
<div class="lbg" style="left:206px;top:370px;width:74px;height:10px"></div>
<div class="leg" style="left:208px;top:371px;background:#ffff00"></div>
<div class="sq" style="left:379px;top:374px;width:170px;height:46px"></div>
<div class="lbg" style="left:387px;top:370px;width:41px;height:10px"></div>
<div class="leg" style="left:389px;top:371px;background:#ff00ff"></div>

<div class="t" id="t0" style="top:8px;color:#000;font-size:13px;font-weight:bold;word-spacing:3.83px;left:7px;transform-origin:0 0;transform:scaleX(0.9600);">CD Speed : Disc Quality Test - BENQ</div>
<div class="t" id="t1" style="top:8px;color:#000;font-size:13px;font-weight:bold;word-spacing:2.93px;left:272px;transform-origin:0 0;transform:scaleX(0.9600);">DVD DD DW1620</div>
<div class="t" id="t2" style="top:8px;color:#000;font-size:13px;font-weight:bold;left:399.5px;transform-origin:0 0;transform:scaleX(0.9683);">B7V9</div>
<div class="t" id="t3" style="top:37px;color:#000;font-size:12px;left:22.5px;transform-origin:0 0;transform:scaleX(0.9607);">Disc Quality</div>
<div class="t" id="t4" style="top:65px;color:#000;font-size:12px;right:688.7px;transform-origin:100% 0;transform:scaleX(0.9000);">5000</div>
<div class="t" id="t5" style="top:92px;color:#000;font-size:12px;right:688.7px;transform-origin:100% 0;transform:scaleX(0.9000);">4000</div>
<div class="t" id="t6" style="top:118px;color:#000;font-size:12px;right:688.7px;transform-origin:100% 0;transform:scaleX(0.9000);">3000</div>
<div class="t" id="t7" style="top:144px;color:#000;font-size:12px;right:688.7px;transform-origin:100% 0;transform:scaleX(0.9000);">2000</div>
<div class="t" id="t8" style="top:170px;color:#000;font-size:12px;right:688.7px;transform-origin:100% 0;transform:scaleX(0.9000);">1000</div>
<div class="t" id="t9" style="top:65px;color:#000;font-size:12px;left:533.3px;transform-origin:0 0;transform:scaleX(0.9000);">16</div>
<div class="t" id="t10" style="top:82px;color:#000;font-size:12px;left:533.3px;transform-origin:0 0;transform:scaleX(0.9000);">14</div>
<div class="t" id="t11" style="top:98px;color:#000;font-size:12px;left:533.3px;transform-origin:0 0;transform:scaleX(0.9000);">12</div>
<div class="t" id="t12" style="top:114px;color:#000;font-size:12px;left:533.3px;transform-origin:0 0;transform:scaleX(0.9000);">10</div>
<div class="t" id="t13" style="top:131px;color:#000;font-size:12px;left:533.3px;transform-origin:0 0;transform:scaleX(0.9000);">8</div>
<div class="t" id="t14" style="top:147px;color:#000;font-size:12px;left:533.3px;transform-origin:0 0;transform:scaleX(0.9000);">6</div>
<div class="t" id="t15" style="top:163px;color:#000;font-size:12px;left:533.3px;transform-origin:0 0;transform:scaleX(0.9000);">4</div>
<div class="t" id="t16" style="top:180px;color:#000;font-size:12px;left:533.3px;transform-origin:0 0;transform:scaleX(0.9000);">2</div>
<div class="t" id="t17" style="top:205px;color:#000;font-size:12px;left:56.0px;transform-origin:0 0;transform:scaleX(0.8270);">0.0</div>
<div class="t" id="t18" style="top:355px;color:#000;font-size:12px;left:56.0px;transform-origin:0 0;transform:scaleX(0.8270);">0.0</div>
<div class="t" id="t19" style="top:205px;color:#000;font-size:12px;left:107.92999999999999px;transform-origin:0 0;transform:scaleX(0.8270);">0.5</div>
<div class="t" id="t20" style="top:355px;color:#000;font-size:12px;left:107.92999999999999px;transform-origin:0 0;transform:scaleX(0.8270);">0.5</div>
<div class="t" id="t21" style="top:205px;color:#000;font-size:12px;left:159.86px;transform-origin:0 0;transform:scaleX(0.8270);">1.0</div>
<div class="t" id="t22" style="top:355px;color:#000;font-size:12px;left:159.86px;transform-origin:0 0;transform:scaleX(0.8270);">1.0</div>
<div class="t" id="t23" style="top:205px;color:#000;font-size:12px;left:211.79000000000002px;transform-origin:0 0;transform:scaleX(0.8270);">1.5</div>
<div class="t" id="t24" style="top:355px;color:#000;font-size:12px;left:211.79000000000002px;transform-origin:0 0;transform:scaleX(0.8270);">1.5</div>
<div class="t" id="t25" style="top:205px;color:#000;font-size:12px;left:263.72px;transform-origin:0 0;transform:scaleX(0.8270);">2.0</div>
<div class="t" id="t26" style="top:355px;color:#000;font-size:12px;left:263.72px;transform-origin:0 0;transform:scaleX(0.8270);">2.0</div>
<div class="t" id="t27" style="top:205px;color:#000;font-size:12px;left:315.65px;transform-origin:0 0;transform:scaleX(0.8270);">2.5</div>
<div class="t" id="t28" style="top:355px;color:#000;font-size:12px;left:315.65px;transform-origin:0 0;transform:scaleX(0.8270);">2.5</div>
<div class="t" id="t29" style="top:205px;color:#000;font-size:12px;left:367.58px;transform-origin:0 0;transform:scaleX(0.8270);">3.0</div>
<div class="t" id="t30" style="top:355px;color:#000;font-size:12px;left:367.58px;transform-origin:0 0;transform:scaleX(0.8270);">3.0</div>
<div class="t" id="t31" style="top:205px;color:#000;font-size:12px;left:419.51px;transform-origin:0 0;transform:scaleX(0.8270);">3.5</div>
<div class="t" id="t32" style="top:355px;color:#000;font-size:12px;left:419.51px;transform-origin:0 0;transform:scaleX(0.8270);">3.5</div>
<div class="t" id="t33" style="top:205px;color:#000;font-size:12px;left:471.44px;transform-origin:0 0;transform:scaleX(0.8270);">4.0</div>
<div class="t" id="t34" style="top:355px;color:#000;font-size:12px;left:471.44px;transform-origin:0 0;transform:scaleX(0.8270);">4.0</div>
<div class="t" id="t35" style="top:205px;color:#000;font-size:12px;left:523.37px;transform-origin:0 0;transform:scaleX(0.8270);">4.5</div>
<div class="t" id="t36" style="top:355px;color:#000;font-size:12px;left:523.37px;transform-origin:0 0;transform:scaleX(0.8270);">4.5</div>
<div class="t" id="t37" style="top:215px;color:#000;font-size:12px;right:688.7px;transform-origin:100% 0;transform:scaleX(0.9000);">2000</div>
<div class="t" id="t38" style="top:242px;color:#000;font-size:12px;right:688.7px;transform-origin:100% 0;transform:scaleX(0.9000);">1600</div>
<div class="t" id="t39" style="top:268px;color:#000;font-size:12px;right:688.7px;transform-origin:100% 0;transform:scaleX(0.9000);">1200</div>
<div class="t" id="t40" style="top:294px;color:#000;font-size:12px;right:688.7px;transform-origin:100% 0;transform:scaleX(0.9000);">800</div>
<div class="t" id="t41" style="top:320px;color:#000;font-size:12px;right:688.7px;transform-origin:100% 0;transform:scaleX(0.9000);">400</div>
<div class="t" id="t42" style="top:215px;color:#000;font-size:12px;left:533.3px;transform-origin:0 0;transform:scaleX(0.9000);">20</div>
<div class="t" id="t43" style="top:242px;color:#000;font-size:12px;left:533.3px;transform-origin:0 0;transform:scaleX(0.9000);">16</div>
<div class="t" id="t44" style="top:268px;color:#000;font-size:12px;left:533.3px;transform-origin:0 0;transform:scaleX(0.9000);">12</div>
<div class="t" id="t45" style="top:294px;color:#000;font-size:12px;left:533.3px;transform-origin:0 0;transform:scaleX(0.9000);">8</div>
<div class="t" id="t46" style="top:320px;color:#000;font-size:12px;left:533.3px;transform-origin:0 0;transform:scaleX(0.9000);">4</div>
<div class="t" id="t47" style="top:60px;color:#000;font-size:12px;left:584px;transform-origin:0 0;transform:scaleX(0.9369);">開始</div>
<div class="t" id="t48" style="top:60px;color:#000;font-size:12px;left:667.3px;transform-origin:0 0;transform:scaleX(0.9646);">終了(<u>X</u>)</div>
<div class="t" id="t49" style="top:80px;color:#0000ff;font-size:12px;left:570px;transform-origin:0 0;transform:scaleX(0.8051);font-feature-settings:"palt";">ディスク情報</div>
<div class="t" id="t50" style="top:93px;color:#000;font-size:12px;left:568.6px;transform-origin:0 0;transform:scaleX(0.6990);font-feature-settings:"palt";">タイプ:</div>
<div class="t" id="t51" style="top:93px;color:#000080;font-size:12px;left:616.6px;transform-origin:0 0;transform:scaleX(0.9265);">DVD+R</div>
<div class="t" id="t52" style="top:108px;color:#000;font-size:12px;left:568.6px;transform-origin:0 0;transform:scaleX(0.7951);font-feature-settings:"palt";">ID:</div>
<div class="t" id="t53" style="top:108px;color:#000080;font-size:12px;left:616.6px;transform-origin:0 0;transform:scaleX(0.9264);">DAXON AZ2</div>
<div class="t" id="t54" style="top:123px;color:#000;font-size:12px;left:568.6px;transform-origin:0 0;transform:scaleX(0.9874);font-feature-settings:"palt";">日付:</div>
<div class="t" id="t55" style="top:123px;color:#000080;font-size:12px;left:616.6px;transform-origin:0 0;transform:scaleX(0.9535);">12 July 2005</div>
<div class="t" id="t56" style="top:137px;color:#000;font-size:12px;left:568.6px;transform-origin:0 0;transform:scaleX(0.8990);font-feature-settings:"palt";">Label:</div>
<div class="t" id="t57" style="top:137px;color:#000080;font-size:12px;left:616.6px;transform-origin:0 0;transform:scaleX(0.8533);">CDS_TEST_B2</div>
<div class="t" id="t58" style="top:154px;color:#0000ff;font-size:12px;left:569.7px;transform-origin:0 0;transform:scaleX(0.9594);">Settings</div>
<div class="t" id="t59" style="top:171px;color:#000;font-size:12px;left:568.5px;transform-origin:0 0;transform:scaleX(0.9934);">転送速度</div>
<div class="t" id="t60" style="top:172px;color:#000;font-size:12px;left:634.6px;transform-origin:0 0;transform:scaleX(0.9200);">6 X</div>
<div class="t" id="t61" style="top:196.5px;color:#000;font-size:12px;left:568.5px;transform-origin:0 0;transform:scaleX(0.9577);">開始</div>
<div class="t" id="t62" style="top:195px;color:#000;font-size:12px;left:633.9px;transform-origin:0 0;transform:scaleX(0.9200);">0000 MB</div>
<div class="t" id="t63" style="top:220px;color:#000;font-size:12px;left:568.5px;transform-origin:0 0;transform:scaleX(0.9934);">終了位置</div>
<div class="t" id="t64" style="top:218px;color:#000;font-size:12px;left:633.9px;transform-origin:0 0;transform:scaleX(0.9200);">4482 MB</div>
<div class="t" id="t65" style="top:242px;color:#000;font-size:12px;left:584.4px;transform-origin:0 0;transform:scaleX(0.9371);">Quick Scan</div>
<div class="t" id="t66" style="top:260px;color:#000;font-size:12px;left:584.4px;transform-origin:0 0;transform:scaleX(0.9275);">Show C1/PIE</div>
<div class="t" id="t67" style="top:274px;color:#000;font-size:12px;left:584.4px;transform-origin:0 0;transform:scaleX(0.9363);">Show C2/PIF</div>
<div class="t" id="t68" style="top:290px;color:#000;font-size:12px;left:584.4px;transform-origin:0 0;transform:scaleX(0.9771);">Show Jitter</div>
<div class="t" id="t69" style="top:305px;color:#000;font-size:12px;left:584.4px;transform-origin:0 0;transform:scaleX(0.9173);">Show Read Speed</div>
<div class="t" id="t70" style="top:320px;color:#a0a0a0;font-size:12px;left:584.4px;transform-origin:0 0;transform:scaleX(0.9257);">Show Write Speed</div>
<div class="t" id="t71" style="top:348px;color:#000;font-size:12px;left:568.5px;transform-origin:0 0;transform:scaleX(0.8209);font-feature-settings:"palt";">品質スコア:</div>
<div class="t" id="t72" style="top:348px;color:#000080;font-size:12px;right:36.39999999999998px;transform-origin:100% 0;transform:scaleX(0.9000);">0</div>
<div class="t" id="t73" style="top:380.5px;color:#000;font-size:12px;left:568.5px;transform-origin:0 0;transform:scaleX(0.9777);font-feature-settings:"palt";">進行状況:</div>
<div class="t" id="t74" style="top:380px;color:#000080;font-size:12px;right:35.700000000000045px;transform-origin:100% 0;transform:scaleX(0.9200);">100 %</div>
<div class="t" id="t75" style="top:399.5px;color:#000;font-size:12px;left:568.5px;transform-origin:0 0;transform:scaleX(0.7341);font-feature-settings:"palt";">ポジション:</div>
<div class="t" id="t76" style="top:399px;color:#000080;font-size:12px;right:36.39999999999998px;transform-origin:100% 0;transform:scaleX(0.9369);">4481 MB</div>
<div class="t" id="t77" style="top:417.5px;color:#000;font-size:12px;left:568.5px;transform-origin:0 0;transform:scaleX(0.9399);font-feature-settings:"palt";">速度:</div>
<div class="t" id="t78" style="top:417px;color:#000080;font-size:12px;right:35px;transform-origin:100% 0;transform:scaleX(0.9200);">6.30 X</div>
<div class="t" id="t79" style="top:365.5px;color:#000;font-size:12px;left:40.1px;transform-origin:0 0;transform:scaleX(0.9315);">PI Errors</div>
<div class="t" id="t80" style="top:382px;color:#000;font-size:12px;left:26.6px;transform-origin:0 0;transform:scaleX(0.9582);font-feature-settings:"palt";">平均:</div>
<div class="t" id="t81" style="top:381px;color:#000080;font-size:12px;right:567.9px;transform-origin:100% 0;transform:scaleX(0.8850);">486.52</div>
<div class="t" id="t82" style="top:399px;color:#000;font-size:12px;left:26.6px;transform-origin:0 0;transform:scaleX(0.9582);font-feature-settings:"palt";">最大:</div>
<div class="t" id="t83" style="top:399px;color:#000080;font-size:12px;right:567.9px;transform-origin:100% 0;transform:scaleX(0.8850);">2140</div>
<div class="t" id="t84" style="top:417px;color:#000;font-size:12px;left:26.6px;transform-origin:0 0;transform:scaleX(0.9716);font-feature-settings:"palt";">合計 :</div>
<div class="t" id="t85" style="top:417px;color:#000080;font-size:12px;right:567.9px;transform-origin:100% 0;transform:scaleX(0.8850);">7320738</div>
<div class="t" id="t86" style="top:365.5px;color:#000;font-size:12px;left:220.3px;transform-origin:0 0;transform:scaleX(0.9362);">PI Failures</div>
<div class="t" id="t87" style="top:382px;color:#000;font-size:12px;left:208.9px;transform-origin:0 0;transform:scaleX(0.9582);font-feature-settings:"palt";">平均:</div>
<div class="t" id="t88" style="top:381px;color:#000080;font-size:12px;right:385.8px;transform-origin:100% 0;transform:scaleX(0.8850);">75.39</div>
<div class="t" id="t89" style="top:399px;color:#000;font-size:12px;left:208.9px;transform-origin:0 0;transform:scaleX(0.9582);font-feature-settings:"palt";">最大:</div>
<div class="t" id="t90" style="top:399px;color:#000080;font-size:12px;right:385.8px;transform-origin:100% 0;transform:scaleX(0.8850);">1019</div>
<div class="t" id="t91" style="top:417px;color:#000;font-size:12px;left:208.9px;transform-origin:0 0;transform:scaleX(0.9716);font-feature-settings:"palt";">合計 :</div>
<div class="t" id="t92" style="top:417px;color:#000080;font-size:12px;right:385.8px;transform-origin:100% 0;transform:scaleX(0.8850);">1127113</div>
<div class="t" id="t93" style="top:365.5px;color:#000;font-size:12px;left:402.5px;transform-origin:0 0;transform:scaleX(0.9610);">Jitter</div>
<div class="t" id="t94" style="top:382px;color:#000;font-size:12px;left:389px;transform-origin:0 0;transform:scaleX(0.9582);font-feature-settings:"palt";">平均:</div>
<div class="t" id="t95" style="top:381px;color:#000080;font-size:12px;right:204.29999999999995px;transform-origin:100% 0;transform:scaleX(0.8850);">10.66 %</div>
<div class="t" id="t96" style="top:399px;color:#000;font-size:12px;left:389px;transform-origin:0 0;transform:scaleX(0.9582);font-feature-settings:"palt";">最大:</div>
<div class="t" id="t97" style="top:399px;color:#000080;font-size:12px;right:204.29999999999995px;transform-origin:100% 0;transform:scaleX(0.8850);">15.0 %</div>
<div class="t" id="t98" style="top:422px;color:#000;font-size:12px;left:389.5px;transform-origin:0 0;transform:scaleX(0.9147);">PO Failures:</div>
<div class="t" id="t99" style="top:422px;color:#000080;font-size:12px;right:206.10000000000002px;transform-origin:100% 0;transform:scaleX(0.9000);">130626</div>
</body>
</html>
